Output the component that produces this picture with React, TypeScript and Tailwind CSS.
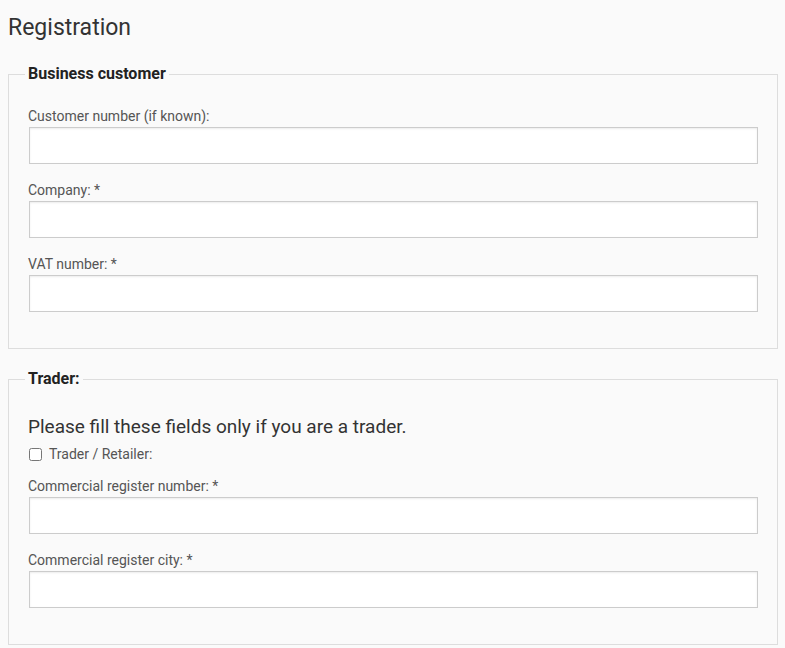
import React from "react";

function Field({ label }: { label: string }) {
  return (
    <div className="mb-4">
      <label className="block text-[14px] leading-5 text-[#555] mb-px -ml-px">{label}</label>
      <input
        type="text"
        className="block w-full h-[37px] bg-white border border-[#ccc] shadow-[inset_0_1px_2px_rgba(0,0,0,0.08)] px-2 text-[14px] outline-none"
      />
    </div>
  );
}

export default function App() {
  return (
    <div className="min-h-screen bg-[#fafafa] pl-2 pr-[7px] pt-[12px] font-['Roboto',sans-serif] text-[#333]">
      <h1 className="text-[23px] leading-8 font-normal text-[#333]">Registration</h1>

      <fieldset className="mt-[20px] border border-[#ddd] px-4 pt-[22px] pb-5">
        <legend className="px-[3px] text-[16px] leading-5 font-bold text-[#222]">Business customer</legend>
        <div className="pl-1 pr-[3px]">
          <Field label="Customer number (if known):" />
          <Field label="Company: *" />
          <Field label="VAT number: *" />
        </div>
      </fieldset>

      <fieldset className="mt-5 border border-[#ddd] px-4 pt-[22px] pb-5">
        <legend className="px-[3px] text-[16px] leading-5 font-bold text-[#222]">Trader:</legend>
        <div className="pl-1 pr-[3px]">
          <p className="text-[19px] leading-[27px] mt-[2px] -ml-px text-[#333]">
            Please fill these fields only if you are a trader.
          </p>
          <div className="flex items-center h-5 mt-1 mb-3">
            <input type="checkbox" className="w-[13px] h-[13px] m-0" />
            <label className="ml-[7px] text-[14px] leading-5 text-[#555]">Trader / Retailer:</label>
          </div>
          <Field label="Commercial register number: *" />
          <Field label="Commercial register city: *" />
        </div>
      </fieldset>
    </div>
  );
}
